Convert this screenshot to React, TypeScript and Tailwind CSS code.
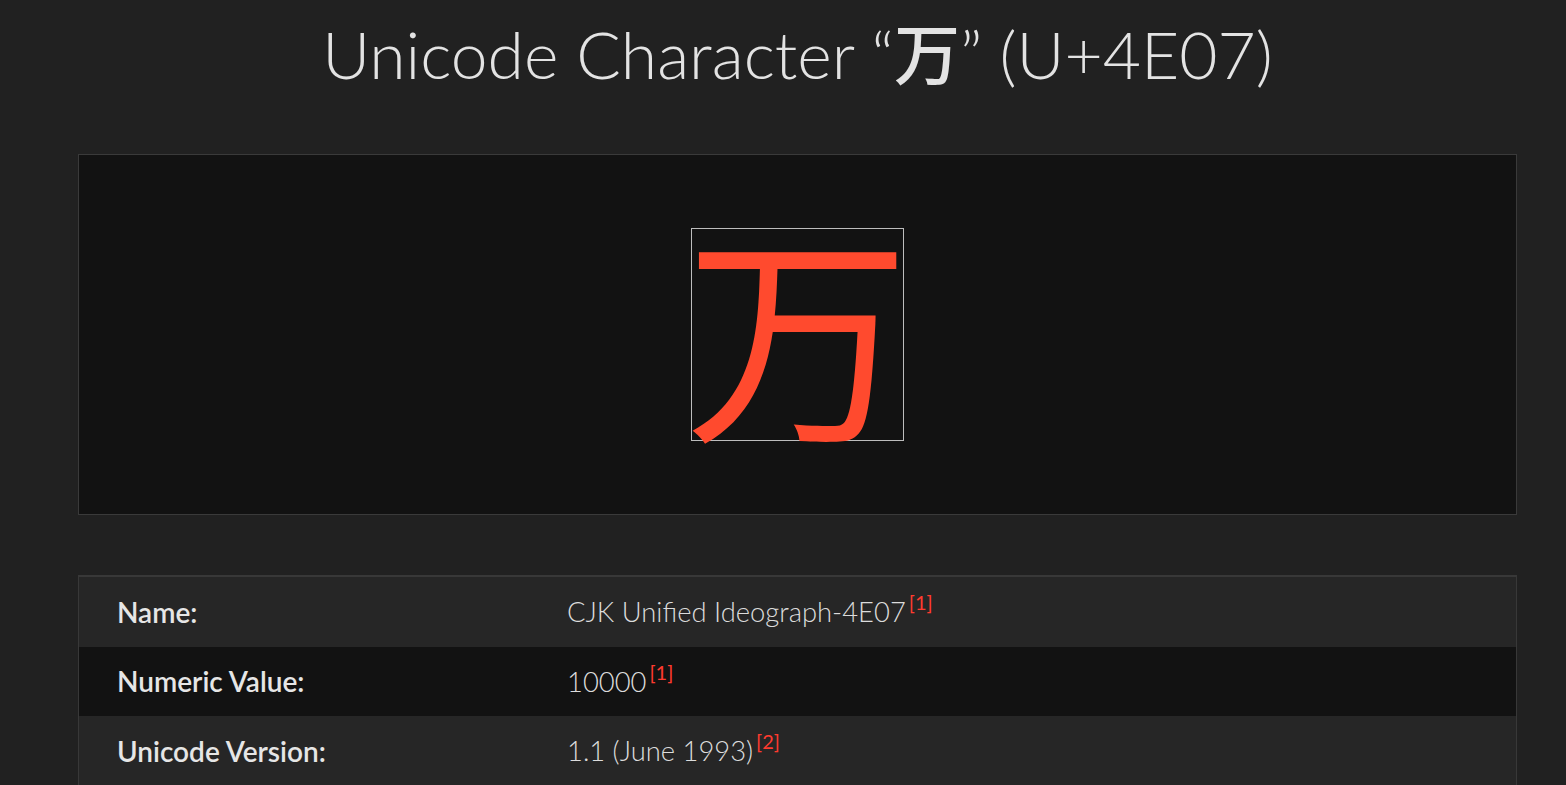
import React from "react";

const Sup = ({ n }: { n: string }) => (
  <sup className="relative -top-[2px] ml-[3px] align-[10px] text-[20px] font-normal text-[#ff3b2f]">[{n}]</sup>
);

export default function App() {
  const rows = [
    { label: "Name:", value: "CJK Unified Ideograph-4E07", ref: "1", bg: "bg-[#262626]" },
    { label: "Numeric Value:", value: "10000", ref: "1", bg: "bg-[#121212]" },
    { label: "Unicode Version:", value: "1.1 (June 1993)", ref: "2", bg: "bg-[#262626]" },
  ];
  return (
    <div
      className="min-h-screen w-full overflow-hidden bg-[#212121] pl-[78px] pr-[49px] text-[#e6e6e6]"
      style={{ fontFamily: 'Lato, "Noto Sans CJK SC", sans-serif' }}
    >
      <h1 className="pt-[5px] text-center text-[66px] font-light leading-[90px] text-[#e3e3e3]">
        Unicode Character “<span className="font-medium" style={{ fontFamily: '"Noto Sans CJK SC", sans-serif' }}>万</span>” (U+4E07)
      </h1>
      <div className="mt-[55px] flex h-[361px] items-center justify-center border border-[#3a3a3a] bg-[#121212]">
        <div className="flex h-[213px] w-[213px] items-center justify-center border border-[#bdbdbd]">
          <span
            className="relative -top-[8px] text-[225px] leading-[190px] text-[#ff4a2e]"
            style={{ fontFamily: '"Noto Sans CJK SC", sans-serif' }}
          >
            万
          </span>
        </div>
      </div>
      <div className="mt-[60px] border-x border-t-2 border-[#383838]">
        {rows.map((r) => (
          <div key={r.label} className={`flex h-[69.5px] items-center ${r.bg}`}>
            <div className="w-[488px] shrink-0 pl-[38px] text-[28px] font-semibold text-[#e6e6e6]">{r.label}</div>
            <div className="text-[27.4px] font-light text-[#dcdcdc]">
              {r.value}
              <Sup n={r.ref} />
            </div>
          </div>
        ))}
      </div>
    </div>
  );
}
